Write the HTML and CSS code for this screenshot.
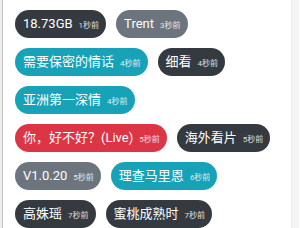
FILE: index.html
```html
<!DOCTYPE html>
<html lang="zh">
<head>
<meta charset="utf-8">
<link rel="stylesheet" href="styles.css">
</head>
<body>
<div class="frame">
  <div class="edge"></div>
  <div class="tags">
    <span class="tag dark">18.73GB<small>1秒前</small></span>
    <span class="tag gray">Trent<small>3秒前</small></span>
    <span class="tag info">需要保密的情话<small>4秒前</small></span>
    <span class="tag dark">细看<small>4秒前</small></span>
    <span class="tag info">亚洲第一深情<small>4秒前</small></span>
    <span class="tag red">你，好不好？(Live)<small>5秒前</small></span>
    <span class="tag dark">海外看片<small>5秒前</small></span>
    <span class="tag gray">V1.0.20<small>5秒前</small></span>
    <span class="tag info">理查马里恩<small>6秒前</small></span>
    <span class="tag dark">高姝瑶<small>7秒前</small></span>
    <span class="tag dark">蜜桃成熟时<small>7秒前</small></span>
  </div>
  <div class="track"></div>
</div>
</body>
</html>
```
FILE: styles.css
```css
html, body {
  margin: 0;
  padding: 0;
  background: #fff;
}
body {
  font-family: "Roboto", "Noto Sans CJK SC", sans-serif;
  width: 300px;
  height: 228px;
  overflow: hidden;
}
.frame {
  display: flex;
  height: 228px;
}
.edge {
  width: 2px;
  background: #eeeeee;
  border-right: 1px solid #c4c4c4;
  flex: none;
}
.tags {
  flex: 1;
  display: flex;
  flex-wrap: wrap;
  align-content: flex-start;
  gap: 10px;
  padding: 9.5px 0 0 12px;
}
.track {
  width: 7px;
  margin-right: 1px;
  background: #f4f4f4;
  border-left: 1px solid #ececec;
  flex: none;
}
.tag {
  display: inline-flex;
  align-items: baseline;
  height: 28px;
  line-height: 28px;
  padding: 0 7px 0 8px;
  border-radius: 14px;
  color: #fff;
  font-size: 13px;
  white-space: nowrap;
}
.tag small {
  font-size: 8px;
  margin-left: 6px;
  color: rgba(255, 255, 255, 0.85);
}
.dark { background: #343a40; }
.gray { background: #6c757d; }
.info { background: #17a2b8; }
.red { background: #dc3545; }
```
